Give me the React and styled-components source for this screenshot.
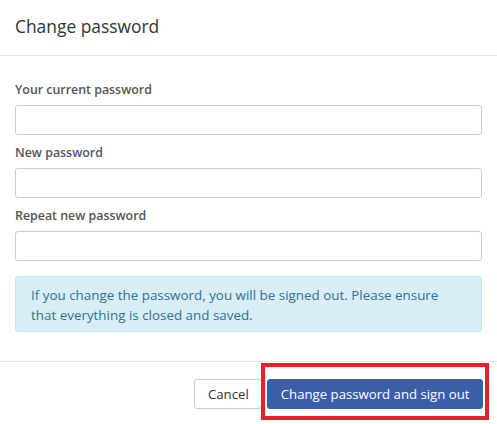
import React from "react";
import styled, { createGlobalStyle } from "styled-components";

const Global = createGlobalStyle`
  html, body { margin: 0; padding: 0; background: #fff; }
  body { font-family: "Open Sans", "Noto Sans", sans-serif; color: #333; }
  * { box-sizing: border-box; }
`;

const Modal = styled.div`
  width: 497px;
  height: 424px;
  background: #fff;
  display: flex;
  flex-direction: column;
`;

const Header = styled.div`
  height: 56px;
  padding: 0 15px;
  display: flex;
  align-items: center;
  border-bottom: 1px solid #e5e5e5;
`;

const Title = styled.h4`
  margin: 0;
  font-size: 17.4px;
  font-weight: 400;
  color: #333;
  line-height: 24px;
  padding-bottom: 3px;
`;

const Body = styled.div`
  padding: 24px 15px 29px;
  display: flex;
  flex-direction: column;
  border-bottom: 1px solid #e5e5e5;
`;

const Group = styled.div`
  display: flex;
  flex-direction: column;
  margin-bottom: 8px;
`;

const Label = styled.label`
  font-size: 12.4px;
  font-weight: 600;
  color: #555;
  line-height: 20px;
  margin-bottom: 5px;
`;

const Input = styled.input`
  height: 30px;
  width: 100%;
  border: 1px solid #ccc;
  border-radius: 3px;
  padding: 4px 10px;
  font: inherit;
  font-size: 13px;
  outline: none;
`;

const Alert = styled.div`
  margin-top: 7px;
  background: #d9edf7;
  border: 1px solid #bce8f1;
  border-radius: 3px;
  color: #31708f;
  font-size: 13.4px;
  line-height: 20px;
  padding: 8px 15px 6px;
`;

const Footer = styled.div`
  padding: 17px 14px 0 15px;
  display: flex;
  justify-content: flex-end;
  gap: 5px;
`;

const Button = styled.button`
  position: relative;
  height: 30px;
  padding: 0 12.5px;
  border-radius: 3px;
  font-family: "Open Sans", "Noto Sans", sans-serif;
  font-size: 13.2px;
  line-height: 28px;
  cursor: pointer;
  border: 1px solid ${(p) => (p.$primary ? "#3a5ba6" : "#ccc")};
  background: ${(p) => (p.$primary ? "#3c5ea9" : "#fff")};
  color: ${(p) => (p.$primary ? "#fff" : "#333")};
`;

const Highlight = styled.span`
  position: absolute;
  left: -7px;
  top: -17px;
  right: -7px;
  bottom: -12px;
  border: 4px solid #e8202a;
  pointer-events: none;
`;

export default function App() {
  return (
    <>
      <Global />
      <Modal>
        <Header>
          <Title>Change password</Title>
        </Header>
        <Body>
          <Group>
            <Label>Your current password</Label>
            <Input type="password" />
          </Group>
          <Group>
            <Label>New password</Label>
            <Input type="password" />
          </Group>
          <Group>
            <Label>Repeat new password</Label>
            <Input type="password" />
          </Group>
          <Alert>
            If you change the password, you will be signed out. Please ensure
            that everything is closed and saved.
          </Alert>
        </Body>
        <Footer>
          <Button>Cancel</Button>
          <Button $primary>
            Change password and sign out
            <Highlight />
          </Button>
        </Footer>
      </Modal>
    </>
  );
}
